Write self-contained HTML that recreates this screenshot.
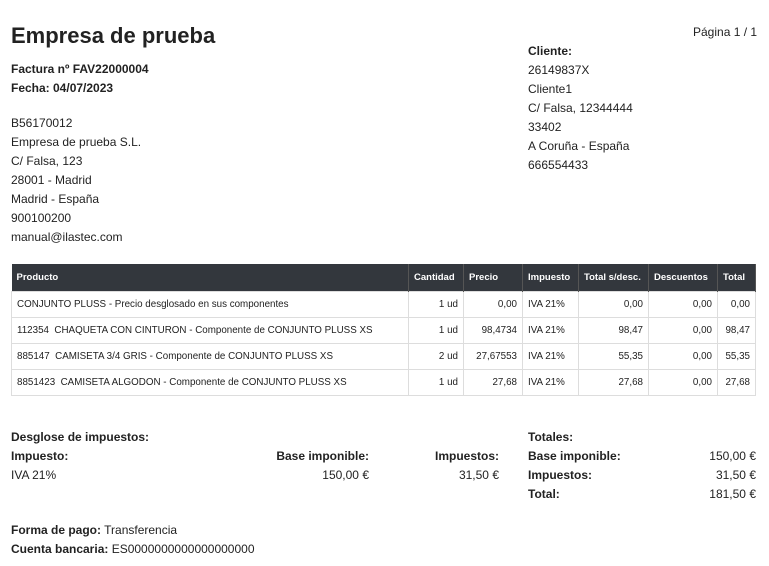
<!DOCTYPE html>
<html><head><meta charset="utf-8"><style>
*{margin:0;padding:0;box-sizing:border-box}
body{width:769px;height:566px;background:#fff;font-family:"Liberation Sans",sans-serif;color:#222;position:relative;overflow:hidden;font-size:12px}
.a{position:absolute;white-space:nowrap}
b{font-weight:bold}
table{position:absolute;left:11px;top:264px;width:745px;border-collapse:collapse;font-size:9.8px}
th{background:#33373d;color:#fff;text-align:left;font-weight:bold;height:27px;padding:0 5px;border-right:1px solid #555;font-size:9.5px;white-space:nowrap}
td{height:26px;border:1px solid #ddd;padding:0 5px;white-space:nowrap}
.r{text-align:right}
.lines div{height:19px;line-height:19px}
</style></head><body>
<div class="a" style="left:11px;top:23px;font-size:22px;font-weight:bold;color:#222">Empresa de prueba</div>
<div class="a" style="left:693px;top:25px;font-size:12px">Página 1 / 1</div>
<div class="a lines" style="left:11px;top:60px;font-weight:bold"><div>Factura nº FAV22000004</div><div>Fecha: 04/07/2023</div></div>
<div class="a lines" style="left:11px;top:114px"><div>B56170012</div><div>Empresa de prueba S.L.</div><div>C/ Falsa, 123</div><div>28001 - Madrid</div><div>Madrid - España</div><div>900100200</div><div>manual@ilastec.com</div></div>
<div class="a lines" style="left:528px;top:42px"><div><b>Cliente:</b></div><div>26149837X</div><div>Cliente1</div><div>C/ Falsa, 12344444</div><div>33402</div><div>A Coruña - España</div><div>666554433</div></div>
<table>
<tr><th style="width:397px">Producto</th><th style="width:55px">Cantidad</th><th style="width:59px">Precio</th><th style="width:56px">Impuesto</th><th style="width:70px">Total s/desc.</th><th style="width:69px">Descuentos</th><th>Total</th></tr>
<tr><td>CONJUNTO PLUSS - Precio desglosado en sus componentes</td><td class="r">1 ud</td><td class="r">0,00</td><td>IVA 21%</td><td class="r">0,00</td><td class="r">0,00</td><td class="r">0,00</td></tr>
<tr><td>112354&nbsp;&nbsp;CHAQUETA CON CINTURON - Componente de CONJUNTO PLUSS XS</td><td class="r">1 ud</td><td class="r">98,4734</td><td>IVA 21%</td><td class="r">98,47</td><td class="r">0,00</td><td class="r">98,47</td></tr>
<tr><td>885147&nbsp;&nbsp;CAMISETA 3/4 GRIS - Componente de CONJUNTO PLUSS XS</td><td class="r">2 ud</td><td class="r">27,67553</td><td>IVA 21%</td><td class="r">55,35</td><td class="r">0,00</td><td class="r">55,35</td></tr>
<tr><td>8851423&nbsp;&nbsp;CAMISETA ALGODON - Componente de CONJUNTO PLUSS XS</td><td class="r">1 ud</td><td class="r">27,68</td><td>IVA 21%</td><td class="r">27,68</td><td class="r">0,00</td><td class="r">27,68</td></tr>
</table>
<div class="a lines" style="left:11px;top:428px"><div><b>Desglose de impuestos:</b></div><div><b>Impuesto:</b></div><div>IVA 21%</div></div>
<div class="a lines" style="right:400px;top:447px;text-align:right"><div><b>Base imponible:</b></div><div>150,00 €</div></div>
<div class="a lines" style="right:270px;top:447px;text-align:right"><div><b>Impuestos:</b></div><div>31,50 €</div></div>
<div class="a lines" style="left:528px;top:428px;font-weight:bold"><div>Totales:</div><div>Base imponible:</div><div>Impuestos:</div><div>Total:</div></div>
<div class="a lines" style="right:13px;top:447px;text-align:right"><div>150,00 €</div><div>31,50 €</div><div>181,50 €</div></div>
<div class="a lines" style="left:11px;top:521px"><div><b>Forma de pago:</b> Transferencia</div><div><b>Cuenta bancaria:</b> ES0000000000000000000</div></div>
</body></html>
